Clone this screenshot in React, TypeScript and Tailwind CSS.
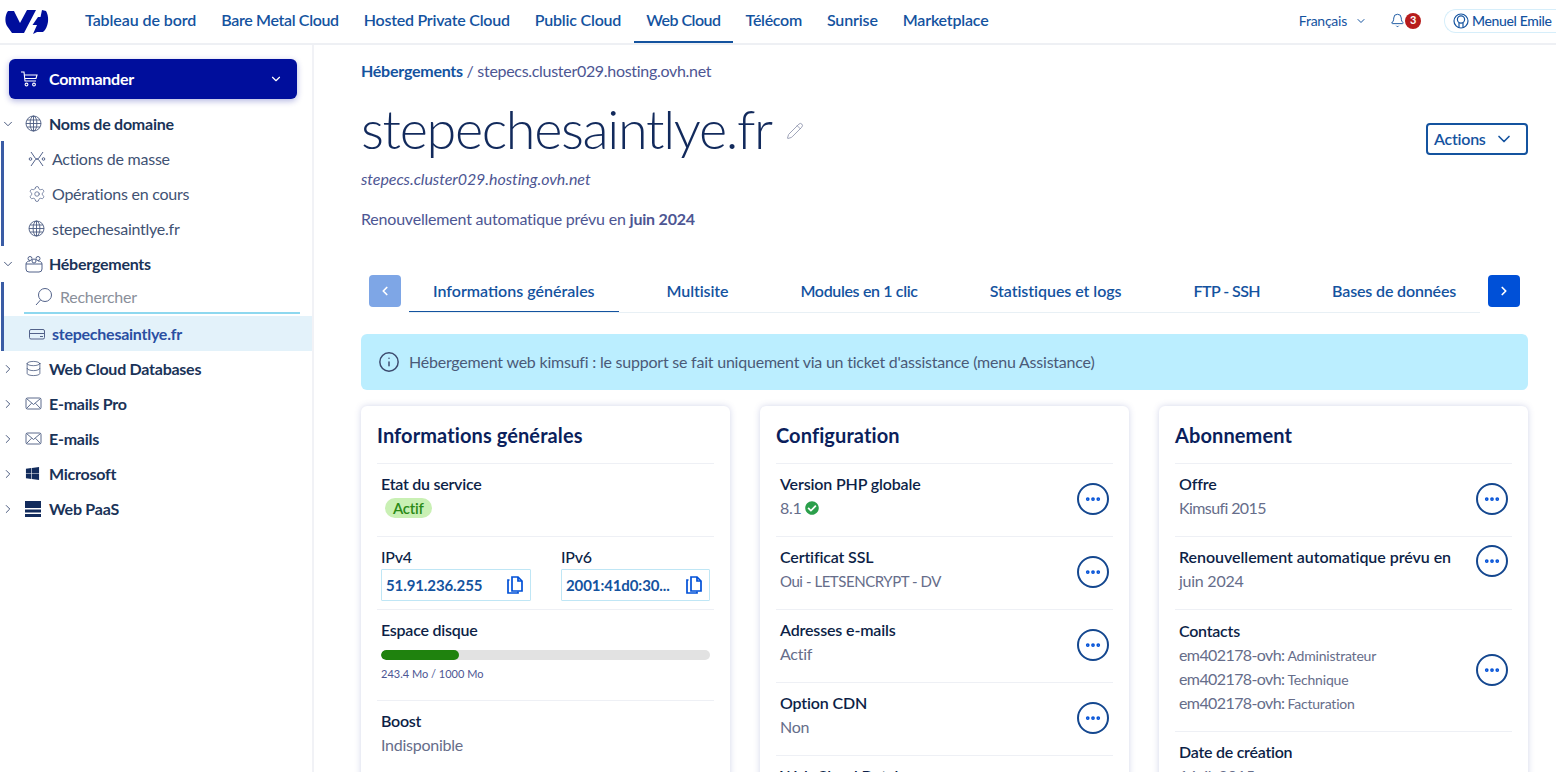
import React from 'react';
import { ChevronDown, ChevronRight, ChevronLeft, Pencil, Settings, Database, Bell, Info, Ellipsis } from 'lucide-react';
import { FaWindows, FaCheckCircle } from 'react-icons/fa';

const NAV = [
  { label: 'Tableau de bord', fit: 'tracking-[-0.08px]' },
  { label: 'Bare Metal Cloud', fit: 'tracking-[-0.35px]' },
  { label: 'Hosted Private Cloud', fit: 'tracking-[-0.25px]' },
  { label: 'Public Cloud', fit: 'tracking-[-0.2px]' },
  { label: 'Web Cloud', fit: 'tracking-[-0.5px]' },
  { label: 'Télécom', fit: 'tracking-[-0.3px]' },
  { label: 'Sunrise', fit: 'tracking-[-0.15px]' },
  { label: 'Marketplace', fit: 'tracking-[-0.2px]' },
];

const TABS = [
  { label: 'Informations générales', fit: 'tracking-[0px]' },
  { label: 'Multisite', fit: 'tracking-[-0.1px]' },
  { label: 'Modules en 1 clic', fit: 'tracking-[-0.35px]' },
  { label: 'Statistiques et logs', fit: 'tracking-[-0.05px]' },
  { label: 'FTP - SSH', fit: 'tracking-[-0.55px]' },
  { label: 'Bases de données', fit: 'tracking-[-0.15px]' },
];

const BLUE = 'text-[#14539f]';

const OvhLogo = () => (
  <svg width="45" height="26" viewBox="5 8 45 26" className="fill-[#000e9c]">
    <path d="M8 10 C5 14 4.5 21 7 25 L12 32 H24 L36 9 H27 L20 22 L14 10 Z" />
    <path d="M42 9 L46 10 C49 15 49 23 45 29 L43 31 H37 L33 33 L37 24 H32.5 L38 16 H40.5 Z" />
  </svg>
);

const CartIcon = () => (
  <svg width="18" height="18" viewBox="0 0 18 18" fill="none" stroke="#fff" strokeWidth="1.1">
    <path d="M1 2h3l1 9h11M4.3 5H17l-1 3.5H5" />
    <circle cx="6.5" cy="14.5" r="1.4" />
    <circle cx="14" cy="14.5" r="1.4" />
  </svg>
);

const GlobeIcon = () => (
  <svg width="17" height="17" viewBox="0 0 17 17" fill="none" stroke="#4a5a80" strokeWidth="0.9">
    <circle cx="8.5" cy="8.5" r="7.5" />
    <ellipse cx="8.5" cy="8.5" rx="3.4" ry="7.5" />
    <path d="M8.5 1v15M1 8.5h15M2 5h13M2 12h13" />
  </svg>
);

const MailIcon = () => (
  <svg width="17" height="17" viewBox="0 0 17 17" fill="none" stroke="#4a5a80" strokeWidth="0.9">
    <rect x="1" y="3" width="15" height="11" rx="1.5" />
    <path d="M1.5 3.5l7 6 7-6M1.5 13.5l5-5.2M15.5 13.5l-5-5.2" />
  </svg>
);

const MassIcon = () => (
  <svg width="18" height="18" viewBox="0 0 18 18" fill="none" stroke="#52628a" strokeWidth="1">
    <path d="M3 2l4.5 6.5 3 1L15 16M15 2l-4.5 6.5-3 1L3 16" />
    <circle cx="2.5" cy="9" r="1.3" />
    <circle cx="15.5" cy="9" r="1.3" />
  </svg>
);

const PeopleIcon = () => (
  <svg width="18" height="18" viewBox="0 0 18 18" fill="none" stroke="#52628a" strokeWidth="1">
    <circle cx="5" cy="3.5" r="2" />
    <circle cx="13" cy="3.5" r="2" />
    <circle cx="9" cy="6" r="2" />
    <path d="M1 9h16v5a3 3 0 0 1-3 3H4a3 3 0 0 1-3-3z" />
    <path d="M1 9c0-2 2-3 4-3M17 9c0-2-2-3-4-3" />
  </svg>
);

const HostIcon = () => (
  <svg width="18" height="18" viewBox="0 0 18 18" fill="none" stroke="#52628a" strokeWidth="1">
    <rect x="1.5" y="4.5" width="15" height="9.5" rx="1.5" />
    <path d="M1.5 8.5h15M12 11.5h3" />
  </svg>
);

const SearchIcon = () => (
  <svg width="20" height="20" viewBox="0 0 20 20" fill="none" stroke="#52628a" strokeWidth="1">
    <circle cx="11" cy="8" r="6.5" />
    <path d="M6.5 13 L2 18" />
  </svg>
);

const PaasIcon = () => (
  <svg width="16" height="16" viewBox="0 0 16 16" className="fill-[#122b5c]">
    <rect y="0" width="16" height="7" />
    <rect y="8.5" width="16" height="3" />
    <rect y="13" width="16" height="3" />
  </svg>
);

const UserIcon = () => (
  <svg width="16" height="16" viewBox="0 0 16 16" fill="none" stroke="#14539f" strokeWidth="1.2">
    <circle cx="8" cy="8" r="7" />
    <circle cx="8" cy="6.5" r="3.6" />
    <path d="M6 10v4.5M10 10v4.5" />
  </svg>
);

const CopyIcon = () => (
  <svg width="18" height="18" viewBox="0 0 18 18" fill="none" stroke="#0050d7" strokeWidth="1.7">
    <path d="M3.5 4H2v13h10v-1.5" />
    <path d="M6 1h6l4 4v10H6z" />
    <path d="M12 1v4h4" />
  </svg>
);

const SideRow = ({ icon, label, open }: { icon: React.ReactNode; label: string; open?: boolean }) => (
  <div className="h-[35px] flex items-center">
    <span className="w-[25px] pl-[1px] text-[#33466e]">
      {open ? <ChevronDown size={14} strokeWidth={1.5} /> : <ChevronRight size={14} strokeWidth={1.5} />}
    </span>
    <span className="w-[24px] flex justify-start">{icon}</span>
    <span className="text-[16px] font-bold text-[#1a3358]">{label}</span>
  </div>
);

const SubRow = ({ icon, label }: { icon: React.ReactNode; label: string }) => (
  <div className="h-[35px] flex items-center pl-[28px]">
    <span className="w-[24px] flex">{icon}</span>
    <span className="text-[16px] text-[#3f5273]">{label}</span>
  </div>
);

const MoreButton = ({ className = '' }: { className?: string }) => (
  <span className={`shrink-0 w-[32px] h-[32px] rounded-full border-2 border-[#14478f] flex items-center justify-center text-[#0050d7] ${className}`}>
    <Ellipsis size={18} strokeWidth={3} />
  </span>
);

const Row = ({ label, value, action = true }: { label: string; value: React.ReactNode; action?: boolean }) => (
  <div className="border-t border-[#eef0f5] flex items-center justify-between pr-[4px] pl-[4px]">
    <div className="pt-[8px] pb-[16px]">
      <div className="text-[16px] leading-[24px] font-semibold tracking-[-0.15px] text-[#0d1f47]">{label}</div>
      <div className="text-[16px] leading-[24px] text-[#666d8a]">{value}</div>
    </div>
    {action && <MoreButton className="-mt-[2px]" />}
  </div>
);

const Card = ({ title, children }: { title: string; children: React.ReactNode }) => (
  <section className="w-[369px] h-[400px] shrink-0 bg-white rounded-[6px] shadow-[0_0_6px_rgba(80,90,170,0.25)] px-[16px] pt-[15px]">
    <h2 className="text-[20px] leading-[28px] font-bold tracking-[0.1px] text-[#0b1f5c] mb-[14px]">{title}</h2>
    {children}
  </section>
);

const IpBox = ({ value }: { value: string }) => (
  <div className="h-[32px] border border-[#bfe6f5] flex items-center justify-between pl-[4px] pr-[6px] rounded-[1px]">
    <span className="text-[15px] font-bold text-[#14539f] whitespace-nowrap tracking-[-0.1px]">{value}</span>
    <CopyIcon />
  </div>
);

export default function App() {
  return (
    <div className="w-[1556px] h-[772px] overflow-hidden bg-white font-[Lato,sans-serif] tracking-[-0.25px] flex flex-col">
      <header className="h-[45px] shrink-0 border-b-2 border-[#eef0f4] flex items-center pl-[5px] relative z-10">
        <OvhLogo />
        <nav className="flex h-full ml-[23px]">
          {NAV.map((item) => (
            <span
              key={item.label}
              className={`h-[43px] px-[12px] mr-[1px] pb-[2px] border-b-2 flex items-center text-[16px] font-semibold ${BLUE} ${item.fit} ${item.label === 'Web Cloud' ? 'border-[#14539f]' : 'border-transparent'}`}
            >
              {item.label}
            </span>
          ))}
        </nav>
        <div className="ml-auto flex items-center pb-[2px]">
          <span className={`text-[14px] ${BLUE}`}>Français</span>
          <ChevronDown size={12} className={`ml-[8px] ${BLUE}`} />
          <Bell size={15} strokeWidth={1.5} className={`ml-[23px] ${BLUE}`} />
          <span className="w-[16px] h-[16px] rounded-full bg-[#b71c1c] text-white text-[11px] font-bold flex items-center justify-center">3</span>
          <div className="ml-[23px] h-[24px] w-[112px] rounded-l-[12px] border border-r-0 border-[#d6eefa] flex items-center pl-[8px] gap-[3px]">
            <UserIcon />
            <span className={`text-[14px] font-medium whitespace-nowrap tracking-[-0.35px] ${BLUE}`}>Menuel Emile</span>
          </div>
        </div>
      </header>

      <div className="flex flex-1 min-h-0">
        <aside className="w-[314px] shrink-0 border-r-2 border-[#f1f2f6]">
          <div className="pl-[9px] pr-[15px] pt-[14px] pb-[7px]">
            <div className="h-[40px] rounded-[6px] bg-[#000e9c] shadow-[0_2px_6px_rgba(0,14,156,0.3)] flex items-center pl-[11px] pr-[14px]">
              <CartIcon />
              <span className="ml-[11px] text-[16px] font-bold text-white">Commander</span>
              <ChevronDown size={14} className="ml-auto text-white" />
            </div>
          </div>
          <SideRow open icon={<GlobeIcon />} label="Noms de domaine" />
          <div className="ml-[1px] border-l-[3px] border-[#3a5ca5]">
            <div className="-ml-[4px]">
              <SubRow icon={<MassIcon />} label="Actions de masse" />
              <SubRow icon={<Settings size={18} strokeWidth={1} className="text-[#52628a]" />} label="Opérations en cours" />
              <SubRow icon={<GlobeIcon />} label="stepechesaintlye.fr" />
            </div>
          </div>
          <SideRow open icon={<PeopleIcon />} label="Hébergements" />
          <div className="ml-[1px] border-l-[3px] border-[#3a5ca5]">
            <div className="ml-[20px] mr-[12px] h-[32px] mt-[1px] flex items-center pl-[10px] border-b-2 border-[#8ed8ef]">
              <SearchIcon />
              <span className="ml-[6px] text-[16px] text-[#8a8f9a]">Rechercher</span>
            </div>
            <div className="mt-[2px] h-[35px] flex items-center bg-[#e3f2fa] pl-[24px]">
              <span className="w-[24px] flex"><HostIcon /></span>
              <span className="text-[16px] font-bold text-[#2a4fa2]">stepechesaintlye.fr</span>
            </div>
          </div>
          <SideRow icon={<Database size={17} strokeWidth={1} className="text-[#33466e]" />} label="Web Cloud Databases" />
          <SideRow icon={<MailIcon />} label="E-mails Pro" />
          <SideRow icon={<MailIcon />} label="E-mails" />
          <SideRow icon={<FaWindows size={15} className="text-[#122b5c]" />} label="Microsoft" />
          <SideRow icon={<PaasIcon />} label="Web PaaS" />
        </aside>

        <main className="flex-1 min-w-0 pl-[47px] pr-[28px]">
          <div className="pt-[14px] text-[16px] leading-[24px] tracking-[-0.3px] text-[#4d5693]">
            <span className="font-bold text-[#14539f] tracking-[-0.25px]">Hébergements</span> / stepecs.cluster029.hosting.ovh.net
          </div>

          <div className="flex items-start justify-between mt-[10px]">
            <div>
              <div className="flex items-center">
                <h1 className="text-[54px] leading-[72px] font-light tracking-[-1.35px] text-[#122a5c]">stepechesaintlye.fr</h1>
                <Pencil size={18} strokeWidth={1} className="ml-[14px] mt-[4px] text-[#7d84a0]" />
              </div>
              <div className="mt-[2px] text-[16px] leading-[24px] italic tracking-[-0.05px] text-[#4d5693]">stepecs.cluster029.hosting.ovh.net</div>
              <div className="mt-[16px] text-[16px] leading-[24px] tracking-[-0.2px] text-[#4d5693]">
                Renouvellement automatique prévu en <b className="font-bold">juin 2024</b>
              </div>
            </div>
            <button className={`mt-[30px] w-[102px] h-[32px] rounded-[4px] border-2 border-[#14539f] flex items-center justify-between pl-[6px] pr-[12px] text-[16px] font-semibold ${BLUE}`}>
              Actions
              <ChevronDown size={20} />
            </button>
          </div>

          <div className="flex items-start mt-[44px] px-[8px]">
            <span className="shrink-0 w-[32px] h-[32px] rounded-[4px] bg-[#7ea6e6] flex items-center justify-center text-white">
              <ChevronLeft size={14} strokeWidth={3} />
            </span>
            <div className="flex-1 min-w-0 overflow-hidden mx-[8px] flex border-b border-[#e8f0f5] h-[38px] gap-[24px]">
              {TABS.map((tab, i) => (
                <span
                  key={tab.label}
                  className={`px-[24px] h-[38px] pb-[4px] border-b-2 flex items-center whitespace-nowrap text-[16px] font-semibold ${BLUE} ${tab.fit} ${i === 0 ? 'border-[#14539f]' : 'border-transparent'}`}
                >
                  {tab.label}
                </span>
              ))}
            </div>
            <span className="shrink-0 w-[32px] h-[32px] rounded-[4px] bg-[#0050d7] flex items-center justify-center text-white">
              <ChevronRight size={14} strokeWidth={3} />
            </span>
          </div>

          <div className="mt-[21px] h-[56px] rounded-[6px] bg-[#bbeeff] flex items-center pl-[17px] gap-[9px] text-[16px] tracking-[-0.22px] text-[#4a5a78]">
            <Info size={22} strokeWidth={1.6} className="text-[#3c4a6e]" />
            Hébergement web kimsufi : le support se fait uniquement via un ticket d'assistance (menu Assistance)
          </div>

          <div className="flex justify-between mt-[16px]">
            <Card title="Informations générales">
              <div className="border-t border-[#eef0f5] pl-[4px] pt-[8px] pb-[16px]">
                <div className="text-[16px] leading-[24px] font-semibold text-[#0d1f47]">Etat du service</div>
                <span className="ml-[4px] inline-block h-[20px] mt-[2px] px-[8px] rounded-full bg-[#c9f0b4] text-[15px] leading-[20px] font-semibold text-[#2a8a16]">Actif</span>
              </div>
              <div className="border-t border-[#eef0f5] pl-[4px] pr-[4px] pt-[8px] pb-[8px] grid grid-cols-[150px_149px] gap-x-[30px]">
                <div>
                  <div className="text-[16px] leading-[24px] font-medium text-[#0d1f47]">IPv4</div>
                  <IpBox value="51.91.236.255" />
                </div>
                <div>
                  <div className="text-[16px] leading-[24px] font-medium text-[#0d1f47]">IPv6</div>
                  <IpBox value="2001:41d0:30..." />
                </div>
              </div>
              <div className="border-t border-[#eef0f5] pl-[4px] pr-[4px] pt-[8px] pb-[19px]">
                <div className="text-[16px] leading-[24px] font-semibold text-[#0d1f47]">Espace disque</div>
                <div className="mt-[8px] h-[10px] rounded-full bg-[#e2e2e2] overflow-hidden">
                  <div className="h-full w-[78px] rounded-full bg-[#1f820e]" />
                </div>
                <div className="mt-[7px] text-[11px] leading-[14px] tracking-normal text-[#4d5693]">243.4 Mo / 1000 Mo</div>
              </div>
              <div className="border-t border-[#eef0f5] pl-[4px] pt-[8px]">
                <div className="text-[16px] leading-[24px] font-semibold text-[#0d1f47]">Boost</div>
                <div className="text-[16px] leading-[24px] text-[#666d8a]">Indisponible</div>
              </div>
            </Card>

            <Card title="Configuration">
              <Row label="Version PHP globale" value={<span className="flex items-center gap-[3px]">8.1 <FaCheckCircle size={14} className="text-[#2b9f4b]" /></span>} />
              <Row label="Certificat SSL" value={<span className="text-[15px] tracking-[-0.45px]">Oui - LETSENCRYPT - DV</span>} />
              <Row label="Adresses e-mails" value="Actif" />
              <Row label="Option CDN" value="Non" />
              <Row label="Web Cloud Databases" value="" action={false} />
            </Card>

            <Card title="Abonnement">
              <Row label="Offre" value={<span className="tracking-[-0.6px]">Kimsufi 2015</span>} />
              <div className="border-t border-[#eef0f5] flex justify-between pr-[4px] pl-[4px]">
                <div className="pt-[8px] pb-[16px]">
                  <div className="text-[16px] leading-[24px] font-semibold tracking-[-0.05px] text-[#0d1f47]">Renouvellement automatique prévu en</div>
                  <div className="text-[16px] leading-[24px] text-[#666d8a]">juin 2024</div>
                </div>
                <MoreButton className="mt-[8px]" />
              </div>
              <div className="border-t border-[#eef0f5] flex items-center justify-between pr-[4px] pl-[4px]">
                <div className="pt-[9px] pb-[16px]">
                  <div className="text-[16px] leading-[24px] font-semibold text-[#0d1f47]">Contacts</div>
                  {['Administrateur', 'Technique', 'Facturation'].map((role) => (
                    <div key={role} className="h-[24px] flex items-center gap-[3px] text-[16px] tracking-[-0.6px] text-[#666d8a]">
                      em402178-ovh: <span className="text-[14px] tracking-[-0.2px]">{role}</span>
                    </div>
                  ))}
                </div>
                <MoreButton className="-mt-[1px]" />
              </div>
              <div className="border-t border-[#eef0f5] pl-[4px] pt-[8px]">
                <div className="text-[16px] leading-[24px] font-semibold text-[#0d1f47]">Date de création</div>
                <div className="text-[16px] leading-[24px] text-[#666d8a]">1 juil. 2015</div>
              </div>
            </Card>
          </div>
        </main>
      </div>
    </div>
  );
}
